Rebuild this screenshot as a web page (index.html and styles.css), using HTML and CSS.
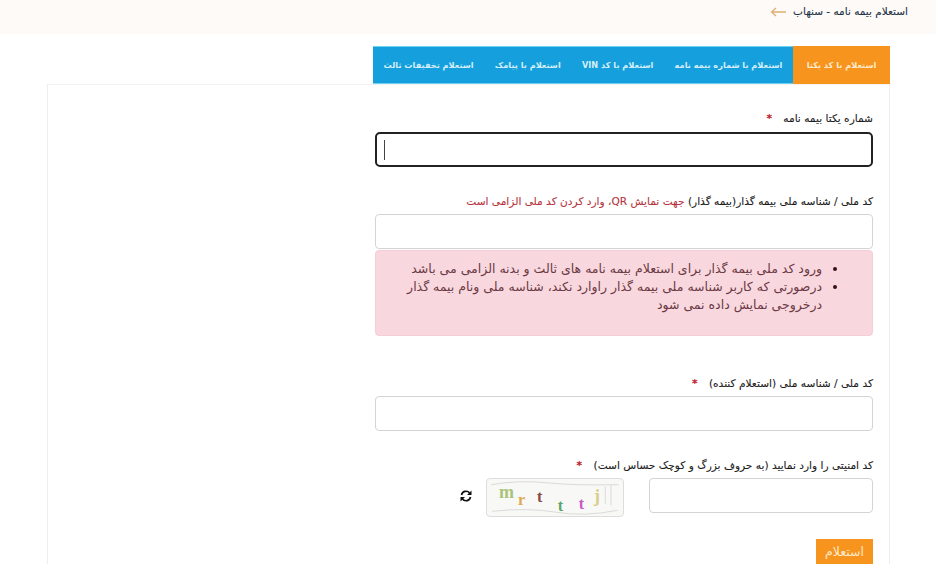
FILE: index.html
```html
<!DOCTYPE html>
<html lang="fa" dir="rtl">
<head>
<meta charset="utf-8">
<title>استعلام بیمه نامه - سنهاب</title>
<link rel="stylesheet" href="styles.css">
</head>
<body>
<header class="topbar">
  <h1 class="title">استعلام بیمه نامه - سنهاب</h1>
  <svg class="arrow" width="16" height="10" viewBox="0 0 16 10"><path d="M16 5H2M6 1 1.500 5 6 9" fill="none" stroke="#e0b070" stroke-width="1.300"/></svg>
</header>
<main class="page">
  <nav class="tabs">
    <a class="tab active">استعلام با کد یکتا</a>
    <a class="tab">استعلام با شماره بیمه نامه</a>
    <a class="tab">استعلام با کد VIN</a>
    <a class="tab">استعلام با پیامک</a>
    <a class="tab">استعلام تخفیفات ثالث</a>
  </nav>
  <section class="panel">
    <form class="form">
      <div class="field f1">
        <label class="label">شماره یکتا بیمه نامه <span class="star">*</span></label>
        <div class="input focus"><span class="caret"></span></div>
      </div>
      <div class="field f2">
        <label class="label">کد ملی / شناسه ملی بیمه گذار(بیمه گذار) <span class="warn">جهت نمایش QR، وارد کردن کد ملی الزامی است</span></label>
        <div class="input"></div>
        <div class="alert">
          <ul>
            <li>ورود کد ملی بیمه گذار برای استعلام بیمه نامه های ثالث و بدنه الزامی می باشد</li>
            <li>درصورتی که کاربر شناسه ملی بیمه گذار راوارد نکند، شناسه ملی ونام بیمه گذار درخروجی نمایش داده نمی شود</li>
          </ul>
        </div>
      </div>
      <div class="field f3">
        <label class="label">کد ملی / شناسه ملی (استعلام کننده) <span class="star">*</span></label>
        <div class="input"></div>
      </div>
      <div class="field f4">
        <label class="label">کد امنیتی را وارد نمایید (به حروف بزرگ و کوچک حساس است) <span class="star">*</span></label>
        <div class="captcha-row">
          <div class="input code"></div>
          <svg class="captcha" width="138" height="39" viewBox="0 0 138 39">
            <path d="M2 6Q30 1 60 4T136 6M3 34Q40 30 70 35T135 33M122 8V26M128 6V28" fill="none" stroke="#d8d8d8"/>
            <g class="captcha-letters">
              <text x="10" y="20" fill="#a9c47a" font-size="19">m</text>
              <text x="30" y="27" fill="#e0a850" font-size="17">r</text>
              <text x="50" y="24" fill="#8a4a44" font-size="17">t</text>
              <text x="72" y="34" fill="#58a868" font-size="17">t</text>
              <text x="94" y="32" fill="#c85ac8" font-size="17">t</text>
              <text x="110" y="24" fill="#d8d08a" font-size="19">j</text>
            </g>
          </svg>
          <svg class="refresh" width="12" height="12" viewBox="0 0 12 12"><path d="M1.500 5A4.600 4.600 0 0 1 9.600 3M10.500 7A4.600 4.600 0 0 1 2.400 9" fill="none" stroke="#111" stroke-width="1.700"/><path d="M11.500 .5V5H7ZM.5 11.500V7H5Z" fill="#111"/></svg>
        </div>
      </div>
      <button type="button" class="submit">استعلام</button>
    </form>
  </section>
</main>
</body>
</html>
```
FILE: styles.css
```css
* { box-sizing: border-box; }
html, body { margin: 0; height: 564px; overflow: hidden; }
body {
  background: #fff;
  color: #222;
  font-family: "DejaVu Sans", "Noto Sans", sans-serif;
}
.topbar {
  height: 34px;
  background: #fdfaf7;
  display: flex;
  align-items: flex-start;
  gap: 7px;
  padding: 3px 28px 0 0;
}
.title {
  margin: 0;
  font-size: 10.500px;
  font-weight: 400;
  line-height: 16px;
  color: #1f3347;
  -webkit-text-stroke: 0.1px currentColor;
}
.arrow { margin-top: 4px; }
.page { padding: 12px 46px 0 47px; }
.tabs { display: flex; width: 517px; }
.tab {
  height: 38px;
  flex: 1 1 auto;
  padding: 0 8px;
  display: flex;
  align-items: center;
  justify-content: center;
  white-space: nowrap;
  font-size: 8.200px;
  font-weight: 700;
  color: #d4eef9;
  background: #159fdc;
  border-top: 1px solid #6fd0f2;
  border-bottom: 1px solid #6fd0f2;
}
.tab.active {
  min-width: 97px;
  background: #f7941e;
  color: #fdeacb;
  border-color: #f7941e;
}
.panel {
  border: 1px solid #eeeeee;
  border-top-color: #f2f2f2;
  height: 500px;
  padding: 0 16px 0 0;
}
.form { width: 498px; }
.field { display: block; }
.label {
  display: block;
  font-size: 10.600px;
  line-height: 14px;
  color: #1c1c1c;
  margin-bottom: 6px;
  white-space: nowrap;
  -webkit-text-stroke: 0.1px currentColor;
}
.star { color: #c0202a; margin-right: 8px; font-weight: 700; }
.warn { color: #b5343c; }
.input {
  height: 35px;
  background: #fff;
  border: 1px solid #d4d4d4;
  border-radius: 4px;
}
.input.focus {
  border: 2px solid #222;
  border-radius: 5px;
  display: flex;
  align-items: center;
  justify-content: flex-end;
  padding-left: 7px;
}
.caret { width: 1px; height: 20px; background: #444; }
.f1 { padding-top: 26px; }
.f1 .label { margin-bottom: 7px; }
.f2 { padding-top: 27px; }
.alert {
  height: 86px;
  margin-top: 1px;
  background: #f8d7de;
  border: 1px solid #f5cdd6;
  border-radius: 4px;
  color: #6b3a44;
  font-size: 12.500px;
  line-height: 18px;
  padding: 9px 0 0 30px;
}
.alert ul { margin: 0; padding: 0 50px 0 0; }
.alert li::marker { color: #3a1018; }
.f3 { padding-top: 40px; }
.f4 { padding-top: 27px; }
.captcha-row { display: flex; align-items: flex-start; }
.code { width: 224px; }
.captcha {
  direction: ltr;
  margin-right: 25px;
  background: #f8f8f7;
  border: 1px solid #ddd;
  border-radius: 4px;
}
.captcha-letters { font-family: "Liberation Serif", serif; font-weight: 700; }
.refresh { margin: 12px 14px 0 0; }
.submit {
  display: block;
  margin-top: 22px;
  width: 57px;
  height: 25px;
  padding: 0;
  border: 0;
  background: #f7941e;
  color: #fdeacb;
  font-family: inherit;
  font-size: 12.500px;
  font-weight: 400;
}
```
